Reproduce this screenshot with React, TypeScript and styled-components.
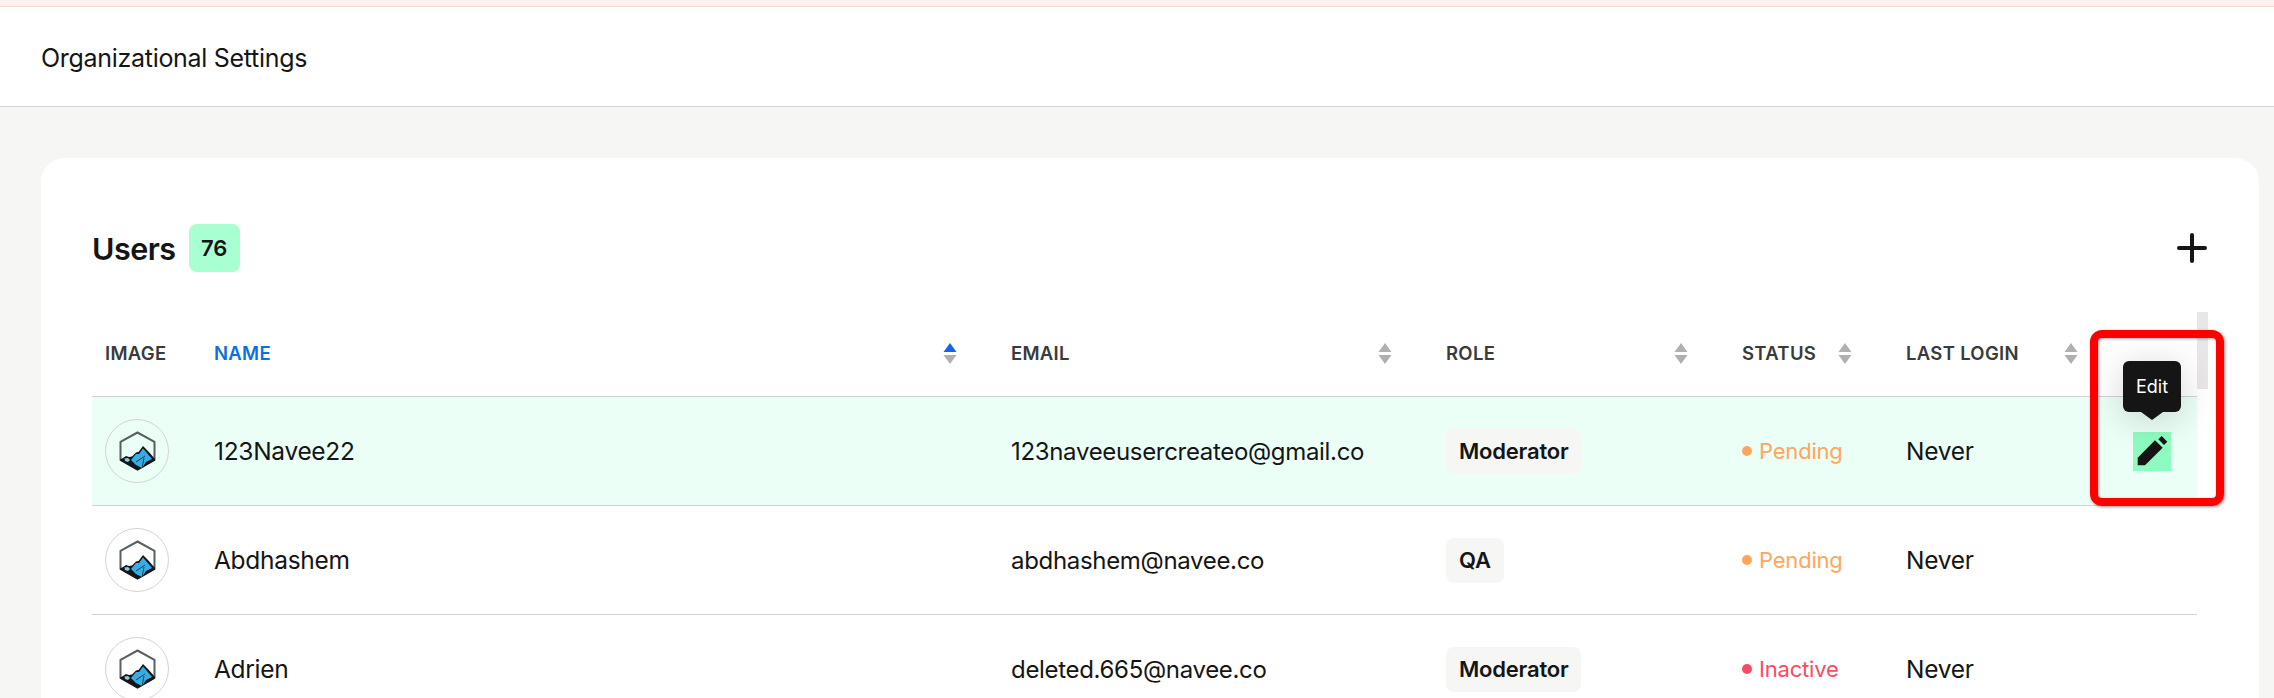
import React from 'react'
import styled, { createGlobalStyle } from 'styled-components'

const GlobalStyle = createGlobalStyle`
  html, body {
    margin: 0;
    padding: 0;
    background: #f6f6f4;
    font-family: "Inter", "Liberation Sans", sans-serif;
    color: #151515;
  }
`

const Page = styled.div`
  width: 2274px;
  height: 698px;
  overflow: hidden;
  display: flex;
  flex-direction: column;
`

const TopStrip = styled.div`
  height: 6px;
  flex: none;
  background: #fdf3ee;
  border-bottom: 1px solid #f5dccf;
`

const Header = styled.header`
  height: 100px;
  box-sizing: border-box;
  flex: none;
  display: flex;
  align-items: center;
  padding: 3px 0 0 41px;
  background: #fff;
  border-bottom: 1px solid #d2d2d2;
  font-size: 25px;
  letter-spacing: -0.3px;
`

const Body = styled.main`
  flex: 1;
  padding: 51px 15px 0 41px;
`

const Card = styled.section`
  position: relative;
  height: 700px;
  padding: 66px 62px 0 51px;
  background: #fff;
  border-radius: 24px;
`

const TitleRow = styled.div`
  height: 48px;
  display: flex;
  align-items: center;
  gap: 13px;
`

const Title = styled.h2`
  margin: 0;
  font-size: 30.5px;
  font-weight: 600;
  letter-spacing: -0.5px;
`

const CountBadge = styled.span`
  width: 51px;
  height: 48px;
  display: flex;
  align-items: center;
  justify-content: center;
  background: #a8ffd2;
  border-radius: 8px;
  font-size: 22px;
  font-weight: 600;
`

const AddIcon = styled.svg`
  margin-left: auto;
  margin-right: -10px;
`

const Row = styled.div<{ $active?: boolean }>`
  display: grid;
  grid-template-columns: 109px 797px 435px 296px 164px 226px 78px;
  align-items: center;
  height: 108px;
  border-bottom: 1px solid #d2d2d2;
  background: ${(p) => (p.$active ? '#ecfff7' : '#fff')};
`

const HeadRow = styled(Row)`
  box-sizing: border-box;
  height: 125px;
  padding-top: 38px;
`

const HeadCell = styled.div<{ $active?: boolean }>`
  display: flex;
  align-items: center;
  justify-content: space-between;
  padding: 0 41px 0 13px;
  font-size: 18.5px;
  font-weight: 600;
  letter-spacing: 0.3px;
  color: ${(p) => (p.$active ? '#0f6fe0' : '#3a3a3a')};
`

const Cell = styled.div`
  display: flex;
  align-items: center;
  padding-left: 13px;
  font-size: 24.5px;
  letter-spacing: -0.3px;
  white-space: nowrap;
`

const EmailCell = styled(Cell)`
  font-size: 24px;
  letter-spacing: -0.32px;
`

const Avatar = styled.div`
  width: 64px;
  height: 64px;
  box-sizing: border-box;
  border: 1px solid #d4d4d4;
  border-radius: 50%;
  display: flex;
  align-items: center;
  justify-content: center;
  background: transparent;
`

const RoleChip = styled.span`
  display: inline-flex;
  align-items: center;
  height: 45px;
  padding: 0 13px;
  background: #f6f6f4;
  border-radius: 8px;
  font-size: 22px;
  font-weight: 600;
  letter-spacing: -0.2px;
`

const Status = styled.span<{ $color: string }>`
  display: inline-flex;
  align-items: center;
  gap: 7px;
  font-size: 22px;
  letter-spacing: -0.2px;
  color: ${(p) => p.$color};

  &::before {
    content: '';
    width: 10px;
    height: 10px;
    border-radius: 50%;
    background: ${(p) => p.$color};
  }
`

const EditButton = styled.button`
  width: 38px;
  height: 39px;
  margin-left: 14px;
  padding: 0;
  border: 0;
  display: flex;
  background: #8efcc0;
`

const ActionCell = styled.div`
  display: flex;
  align-items: center;
`

const ScrollThumb = styled.div`
  position: absolute;
  left: 2156px;
  top: 154px;
  width: 11px;
  height: 77px;
  background: #e8e6e6;
`

const Tooltip = styled.div`
  position: absolute;
  left: 2082px;
  top: 203px;
  width: 58px;
  height: 51px;
  display: flex;
  align-items: center;
  justify-content: center;
  background: #151515;
  border-radius: 6px;
  color: #fff;
  font-size: 18px;
  box-shadow: 0 6px 36px rgba(0, 0, 0, 0.18);

  &::after {
    content: '';
    position: absolute;
    left: 18px;
    bottom: -8px;
    border-left: 11px solid transparent;
    border-right: 11px solid transparent;
    border-top: 8px solid #151515;
  }
`

const Highlight = styled.div`
  position: absolute;
  left: 2049px;
  top: 172px;
  width: 134px;
  height: 176px;
  box-sizing: border-box;
  border: 8px solid #ff0000;
  border-radius: 12px;
  box-shadow: 1px 1px 3px rgba(0, 0, 0, 0.45), inset 1px 1px 3px rgba(0, 0, 0, 0.35);
`

const SortIcon: React.FC<{ active?: boolean }> = ({ active }) => (
  <svg width="14" height="21" viewBox="0 0 14 21">
    <path d="M7 0 L13.5 9 H0.5 Z" fill={active ? '#1463f3' : '#b0b0b0'} />
    <path d="M0.5 12 H13.5 L7 21 Z" fill="#b0b0b0" />
  </svg>
)

const PencilIcon: React.FC = () => (
  <svg width="38" height="39" viewBox="0 0 38 39" fill="#151515">
    <path d="M4.7 25.7 L22 8.3 L29.7 15.7 L12 33.3 H4.7 Z" />
    <path d="M25.3 7.3 L28.7 4 L34.3 9.7 L31 13 Z" />
  </svg>
)

const NaveeLogo: React.FC = () => (
  <svg width="38" height="40" viewBox="0 0 38 40">
    <path d="M19.5 1.5 L36.5 10.9 V29 L19.5 38.6 L2.5 29 V10.9 Z" fill="none" stroke="#5a5f5f" strokeWidth="2" strokeLinejoin="round" />
    <path d="M2 28.5 L5 27 L8 25 L11 26 L14 25.5 L18 21.5 L20.5 21 L25 15 L30 20 L37 28 V29.5 L19.5 39.5 L2 29.5 Z" fill="#151515" />
    <path d="M13 29 L18 23 L21 23 L25 17.5 L28 21 L34 28 L28 31 L24 37 L18 34 Z" fill="#35aee8" />
    <path d="M18 31 L27 25 M24 37 L26 27" stroke="#151515" strokeWidth="0.7" fill="none" />
    <path d="M6.5 27.5 L10 27 L12 29 L10 31 L7 30 Z" fill="#8ccbe8" />
  </svg>
)

const users = [
  { name: '123Navee22', email: '123naveeusercreateo@gmail.co', role: 'Moderator', status: 'Pending' },
  { name: 'Abdhashem', email: 'abdhashem@navee.co', role: 'QA', status: 'Pending' },
  { name: 'Adrien', email: 'deleted.665@navee.co', role: 'Moderator', status: 'Inactive' },
]

const statusColors: Record<string, string> = {
  Pending: '#ffa65c',
  Inactive: '#fb4a63',
}

const App: React.FC = () => (
  <>
    <GlobalStyle />
    <Page>
      <TopStrip />
      <Header>Organizational Settings</Header>
      <Body>
        <Card>
          <TitleRow>
            <Title>Users</Title>
            <CountBadge>76</CountBadge>
            <AddIcon width="30" height="30" viewBox="0 0 30 30">
              <path d="M15 2 V28 M2 15 H28" stroke="#151515" strokeWidth="4" strokeLinecap="round" />
            </AddIcon>
          </TitleRow>
          <HeadRow>
            <HeadCell>IMAGE</HeadCell>
            <HeadCell $active>
              NAME <SortIcon active />
            </HeadCell>
            <HeadCell>
              EMAIL <SortIcon />
            </HeadCell>
            <HeadCell>
              ROLE <SortIcon />
            </HeadCell>
            <HeadCell>
              STATUS <SortIcon />
            </HeadCell>
            <HeadCell>
              LAST LOGIN <SortIcon />
            </HeadCell>
            <div />
          </HeadRow>
          {users.map((u, i) => (
            <Row key={u.name} $active={i === 0}>
              <Cell>
                <Avatar>
                  <NaveeLogo />
                </Avatar>
              </Cell>
              <Cell>{u.name}</Cell>
              <EmailCell>{u.email}</EmailCell>
              <Cell>
                <RoleChip>{u.role}</RoleChip>
              </Cell>
              <Cell>
                <Status $color={statusColors[u.status]}>{u.status}</Status>
              </Cell>
              <Cell>Never</Cell>
              <ActionCell>
                {i === 0 && (
                  <EditButton aria-label="Edit">
                    <PencilIcon />
                  </EditButton>
                )}
              </ActionCell>
            </Row>
          ))}
          <ScrollThumb />
          <Tooltip>Edit</Tooltip>
          <Highlight />
        </Card>
      </Body>
    </Page>
  </>
)

export default App
